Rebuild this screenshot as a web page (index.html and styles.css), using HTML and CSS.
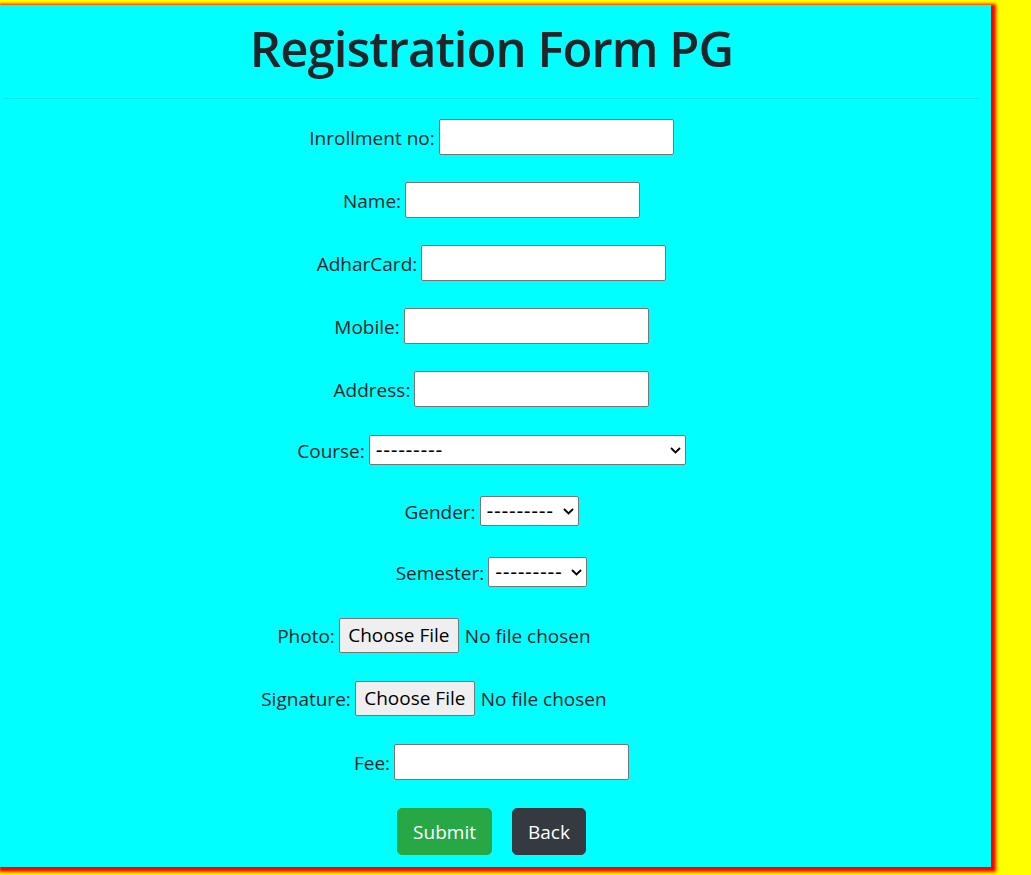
FILE: index.html
```html
<!DOCTYPE html>
<html lang="en">
<head>
<meta charset="utf-8">
<title>Registration Form PG</title>
<link rel="stylesheet" href="styles.css">
</head>
<body>
<div class="card">
  <h1 class="title">Registration Form PG</h1>
  <hr class="rule">
  <form class="form">
    <div class="row"><label class="lbl">Inrollment no:</label><input class="field" type="text"></div>
    <div class="row"><label class="lbl">Name:</label><input class="field" type="text"></div>
    <div class="row"><label class="lbl">AdharCard:</label><input class="field wide" type="text"></div>
    <div class="row"><label class="lbl">Mobile:</label><input class="field wide" type="text"></div>
    <div class="row tight"><label class="lbl">Address:</label><input class="field" type="text"></div>
    <div class="row tight"><label class="lbl">Course:</label>
      <span class="select-wrap course"><select class="sel"><option>---------</option></select>
        <svg class="chev" width="11" height="7" viewBox="0 0 11 7"><path d="M1 1 L5.5 5.5 L10 1" fill="none" stroke="#000" stroke-width="1.8"/></svg></span></div>
    <div class="row tight"><label class="lbl">Gender:</label>
      <span class="select-wrap small"><select class="sel"><option>---------</option></select>
        <svg class="chev" width="11" height="7" viewBox="0 0 11 7"><path d="M1 1 L5.5 5.5 L10 1" fill="none" stroke="#000" stroke-width="1.8"/></svg></span></div>
    <div class="row"><label class="lbl">Semester:</label>
      <span class="select-wrap small"><select class="sel"><option>---------</option></select>
        <svg class="chev" width="11" height="7" viewBox="0 0 11 7"><path d="M1 1 L5.5 5.5 L10 1" fill="none" stroke="#000" stroke-width="1.8"/></svg></span></div>
    <div class="row"><label class="lbl">Photo:</label><span class="file-input"><button type="button" class="file-btn">Choose File</button><span class="file-txt">No file chosen</span></span></div>
    <div class="row roomy"><label class="lbl">Signature:</label><span class="file-input"><button type="button" class="file-btn">Choose File</button><span class="file-txt">No file chosen</span></span></div>
    <div class="row last"><label class="lbl">Fee:</label><input class="field" type="text"></div>
    <div class="actions">
      <button type="submit" class="btn btn-green">Submit</button>
      <button type="button" class="btn btn-dark">Back</button>
    </div>
  </form>
</div>
</body>
</html>
```

FILE: styles.css
```css
html, body {
  margin: 0;
  padding: 0;
}
body {
  background: #ffff00;
  padding-top: 5px;
  font-family: "Open Sans", "Noto Sans", sans-serif;
  color: #212529;
  overflow: hidden;
  height: 870px;
}
.card {
  box-sizing: border-box;
  width: 991px;
  height: 862px;
  background: #00ffff;
  box-shadow: 2px 2px 3px 3px #ff0000;
  padding: 13px 12px 0 4px;
}
.title {
  margin: 0;
  font-size: 49px;
  font-weight: 600;
  letter-spacing: -0.95px;
  line-height: 60px;
  text-align: center;
  color: #212529;
}
.rule {
  margin: 20px 0 20px 0;
  border: 0;
  border-top: 1px solid rgba(0,0,0,0.1);
  height: 0;
}
.form {
  display: flex;
  flex-direction: column;
  align-items: center;
}
.row {
  display: flex;
  align-items: center;
  justify-content: center;
  height: 36px;
  margin-bottom: 27px;
  gap: 4px;
  font-size: 19px;
}
.row.tight { margin-bottom: 25px; }
.row.roomy { margin-bottom: 28px; }
.row.last { margin-bottom: 28px; }
.lbl {
  white-space: nowrap;
  padding-top: 2px;
}
.field {
  box-sizing: border-box;
  width: 235px;
  height: 36px;
  border: 1px solid #767676;
  border-radius: 2px;
  background: #fff;
  margin: 0;
  padding: 0 4px;
}
.field.wide { width: 245px; }
.select-wrap {
  position: relative;
  display: inline-block;
  height: 30px;
}
.select-wrap.course { width: 317px; }
.select-wrap.small { width: 99px; }
.sel {
  appearance: none;
  -webkit-appearance: none;
  box-sizing: border-box;
  width: 100%;
  height: 30px;
  border: 1px solid #767676;
  border-radius: 2px;
  background: #fff;
  margin: 0;
  padding: 0 0 0 6px;
  font-family: "DejaVu Sans", sans-serif;
  font-size: 19px;
  color: #000;
  letter-spacing: 0.6px;
}
.chev {
  position: absolute;
  right: 5px;
  top: 12px;
}
.file-input {
  display: flex;
  align-items: center;
  width: 367px;
  white-space: nowrap;
}
.file-btn {
  box-sizing: border-box;
  width: 120px;
  height: 35px;
  background: #efefef;
  border: 1px solid #767676;
  border-radius: 2px;
  font-family: inherit;
  font-size: 19px;
  color: #000;
  padding: 0;
  margin: 0;
}
.file-txt {
  margin-left: 6px;
  padding-top: 2px;
}
.actions {
  display: flex;
  gap: 20px;
  justify-content: center;
}
.btn {
  box-sizing: border-box;
  height: 47px;
  border: 1px solid transparent;
  border-radius: 5px;
  padding: 0 15px;
  font-family: inherit;
  font-size: 19px;
  color: #fff;
}
.btn-green { background: #28a745; border-color: #28a745; }
.btn-dark { background: #343a40; border-color: #343a40; }
```
